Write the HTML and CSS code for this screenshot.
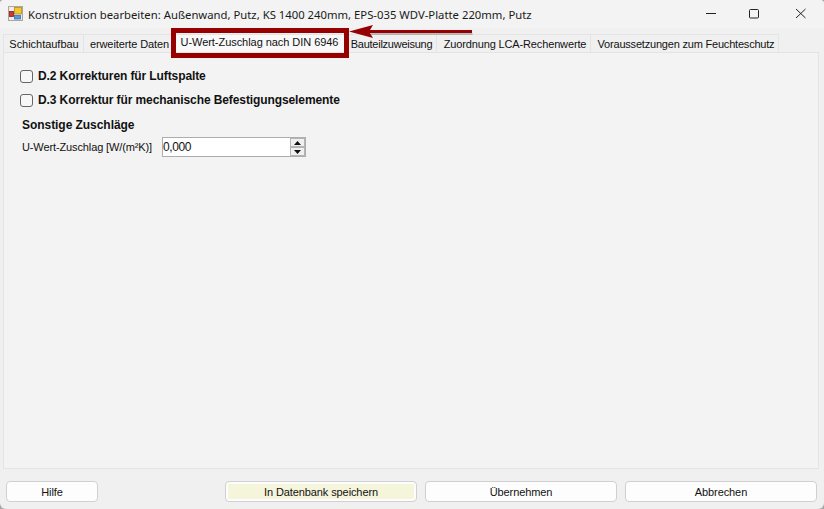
FILE: index.html
```html
<!DOCTYPE html>
<html lang="de">
<head>
<meta charset="utf-8">
<title>Konstruktion bearbeiten</title>
<link rel="stylesheet" href="styles.css">
</head>
<body>
<div class="window">
  <header class="titlebar">
    <svg class="appicon" width="15" height="15" viewBox="0 0 15 15">
      <rect x="0.5" y="0.5" width="14" height="14" fill="#ececec" stroke="#a8a8a0"/>
      <rect x="6.5" y="1.5" width="7" height="6.5" fill="#f6c52f" stroke="#b58a1c" stroke-width="0.8"/>
      <rect x="1.5" y="5.5" width="4" height="5" fill="#d2352a" stroke="#8d2018" stroke-width="0.8"/>
      <rect x="6.5" y="9.5" width="6" height="3.5" fill="#5a9be0" stroke="#3a6fb0" stroke-width="0.8"/>
    </svg>
    <span class="title">Konstruktion bearbeiten: Außenwand, Putz, KS 1400 240mm, EPS-035 WDV-Platte 220mm, Putz</span>
    <div class="controls">
      <svg class="ctl" width="46" height="28" viewBox="0 0 46 28"><path d="M21 13.5h10" stroke="#222" fill="none"/></svg>
      <svg class="ctl" width="46" height="28" viewBox="0 0 46 28"><rect x="18.5" y="9.5" width="9" height="8.5" rx="1" stroke="#222" fill="none"/></svg>
      <svg class="ctl" width="46" height="28" viewBox="0 0 46 28"><path d="M19 9l9.5 9M28.5 9l-9.5 9" stroke="#222" fill="none"/></svg>
    </div>
  </header>

  <nav class="tabs">
    <span class="tab tab-a">Schichtaufbau</span>
    <span class="tab tab-b">erweiterte Daten</span>
    <span class="tab tab-active">U-Wert-Zuschlag nach DIN 6946</span>
    <span class="tab tab-c">Bauteilzuweisung</span>
    <span class="tab tab-d">Zuordnung LCA-Rechenwerte</span>
    <span class="tab tab-e">Voraussetzungen zum Feuchteschutz</span>
  </nav>

  <main class="panel">
    <label class="check"><span class="box"></span><span>D.2 Korrekturen für Luftspalte</span></label>
    <label class="check"><span class="box"></span><span>D.3 Korrektur für mechanische Befestigungselemente</span></label>
    <h2 class="section">Sonstige Zuschläge</h2>
    <div class="field">
      <span class="field-label">U-Wert-Zuschlag [W/(m²K)]</span>
      <div class="spin">
        <span class="spin-value">0,000</span>
        <div class="spin-btns">
          <span class="spin-btn"><svg width="7" height="4" viewBox="0 0 7 4"><path d="M3.5 0L7 4H0z" fill="#111"/></svg></span>
          <span class="spin-btn"><svg width="7" height="4" viewBox="0 0 7 4"><path d="M0 0h7L3.5 4z" fill="#111"/></svg></span>
        </div>
      </div>
    </div>
  </main>

  <footer class="footer">
    <button class="btn btn-help">Hilfe</button>
    <button class="btn btn-wide btn-save">In Datenbank speichern</button>
    <button class="btn btn-wide">Übernehmen</button>
    <button class="btn btn-wide">Abbrechen</button>
  </footer>

  <div class="highlight"></div>
  <svg class="arrow" width="126" height="20" viewBox="0 0 126 20">
    <path d="M22 11H123.5" stroke="#000" stroke-opacity="0.22" stroke-width="2" fill="none"/>
    <path d="M0 8.5L24 2L21 7H123V10H21L24 15z" fill="#960000"/>
  </svg>
</div>
</body>
</html>
```

FILE: styles.css
```css
* { box-sizing: border-box; }
html, body { margin: 0; padding: 0; height: 100%; }
body {
  background: #a8a8a8;
  font-family: "Liberation Sans", Arial, sans-serif;
  font-size: 11px;
  color: #111;
}
.window {
  position: relative;
  width: 824px;
  height: 509px;
  display: flex;
  flex-direction: column;
  background: #f0f0f0;
  border-radius: 4px 4px 6px 6px;
  overflow: hidden;
}
.titlebar {
  height: 28px;
  margin-bottom: 6px;
  display: flex;
  align-items: center;
  padding-left: 8px;
  background: #f3f3f3;
}
.appicon { flex: none; margin-top: -1px; }
.title { margin-left: 5px; font-family: "Noto Sans", "Liberation Sans", sans-serif; font-size: 11.3px; color: #1a1a1a; }
.controls { margin-left: auto; display: flex; margin-right: 1px; }
.ctl { display: block; }
.tabs {
  height: 18px;
  display: flex;
  padding-left: 3px;
}
.tab {
  display: flex;
  align-items: center;
  justify-content: center;
  padding-top: 1px;
  background: #f0f0f0;
  border: 1px solid #e4e4e4;
  border-bottom: 0;
  border-left: 0;
  white-space: nowrap;
  letter-spacing: -0.05px;
}
.tab-a { width: 81px; border-left: 1px solid #e4e4e4; padding-left: 1px; letter-spacing: -0.03px; }
.tab-b { width: 88px; padding-left: 4px; letter-spacing: -0.1px; }
.tab-active { width: 176px; padding: 0 0 3px; background: #f9f9f9; }
.tab-c { width: 89px; padding-right: 1px; letter-spacing: -0.25px; }
.tab-d { width: 154px; padding-left: 3px; letter-spacing: -0.14px; }
.tab-e { width: 188px; padding-left: 3px; letter-spacing: -0.2px; }
.panel {
  height: 417px;
  margin: 0 5px 0 3px;
  padding: 11px 16px 0;
  background: #f3f3f3;
  border: 1px solid #e4e4e4;
}
.check {
  height: 24px;
  display: flex;
  align-items: center;
  gap: 5px;
  font-weight: bold;
  font-size: 12px;
  letter-spacing: -0.1px;
}
.box {
  width: 13px;
  height: 13px;
  margin-top: 1px;
  background: #f7f7f7;
  border: 1px solid #666;
  border-radius: 3px;
}
.section {
  margin: 3px 0 0 2px;
  height: 20px;
  line-height: 20px;
  font-size: 12px;
  font-weight: bold;
  letter-spacing: -0.05px;
}
.field {
  margin: 2px 0 0 2px;
  display: flex;
  align-items: center;
  gap: 10px;
}
.field-label { width: 130px; white-space: nowrap; letter-spacing: -0.12px; }
.spin {
  width: 144px;
  height: 20px;
  display: flex;
  align-items: center;
  background: #fff;
  border: 1px solid #adadad;
}
.spin-value { flex: 1; font-size: 12px; letter-spacing: -0.4px; }
.spin-btns { width: 15px; height: 18px; display: flex; flex-direction: column; }
.spin-btn {
  flex: 1;
  display: flex;
  align-items: center;
  justify-content: center;
  background: #f0f0f0;
  border: 1px solid #b5b5b5;
}
.footer {
  flex: 1;
  display: flex;
  align-items: flex-start;
  padding: 12px 7px 0 6px;
  gap: 8px;
}
.btn {
  height: 21px;
  padding: 0;
  font: inherit;
  color: #111;
  background: #fdfdfd;
  border: 1px solid #d0d0d0;
  border-radius: 4px;
  letter-spacing: -0.1px;
}
.btn-help { width: 92px; margin-right: 119px; }
.btn-wide { width: 192px; }
.btn-save { background: #f5f5dc; box-shadow: inset 0 0 0 2px #fdfdfd; }
.highlight {
  position: absolute;
  left: 171px;
  top: 28px;
  width: 178px;
  height: 30px;
  border: 5px solid #960000;
  pointer-events: none;
}
.arrow {
  position: absolute;
  left: 349px;
  top: 23px;
}
```
